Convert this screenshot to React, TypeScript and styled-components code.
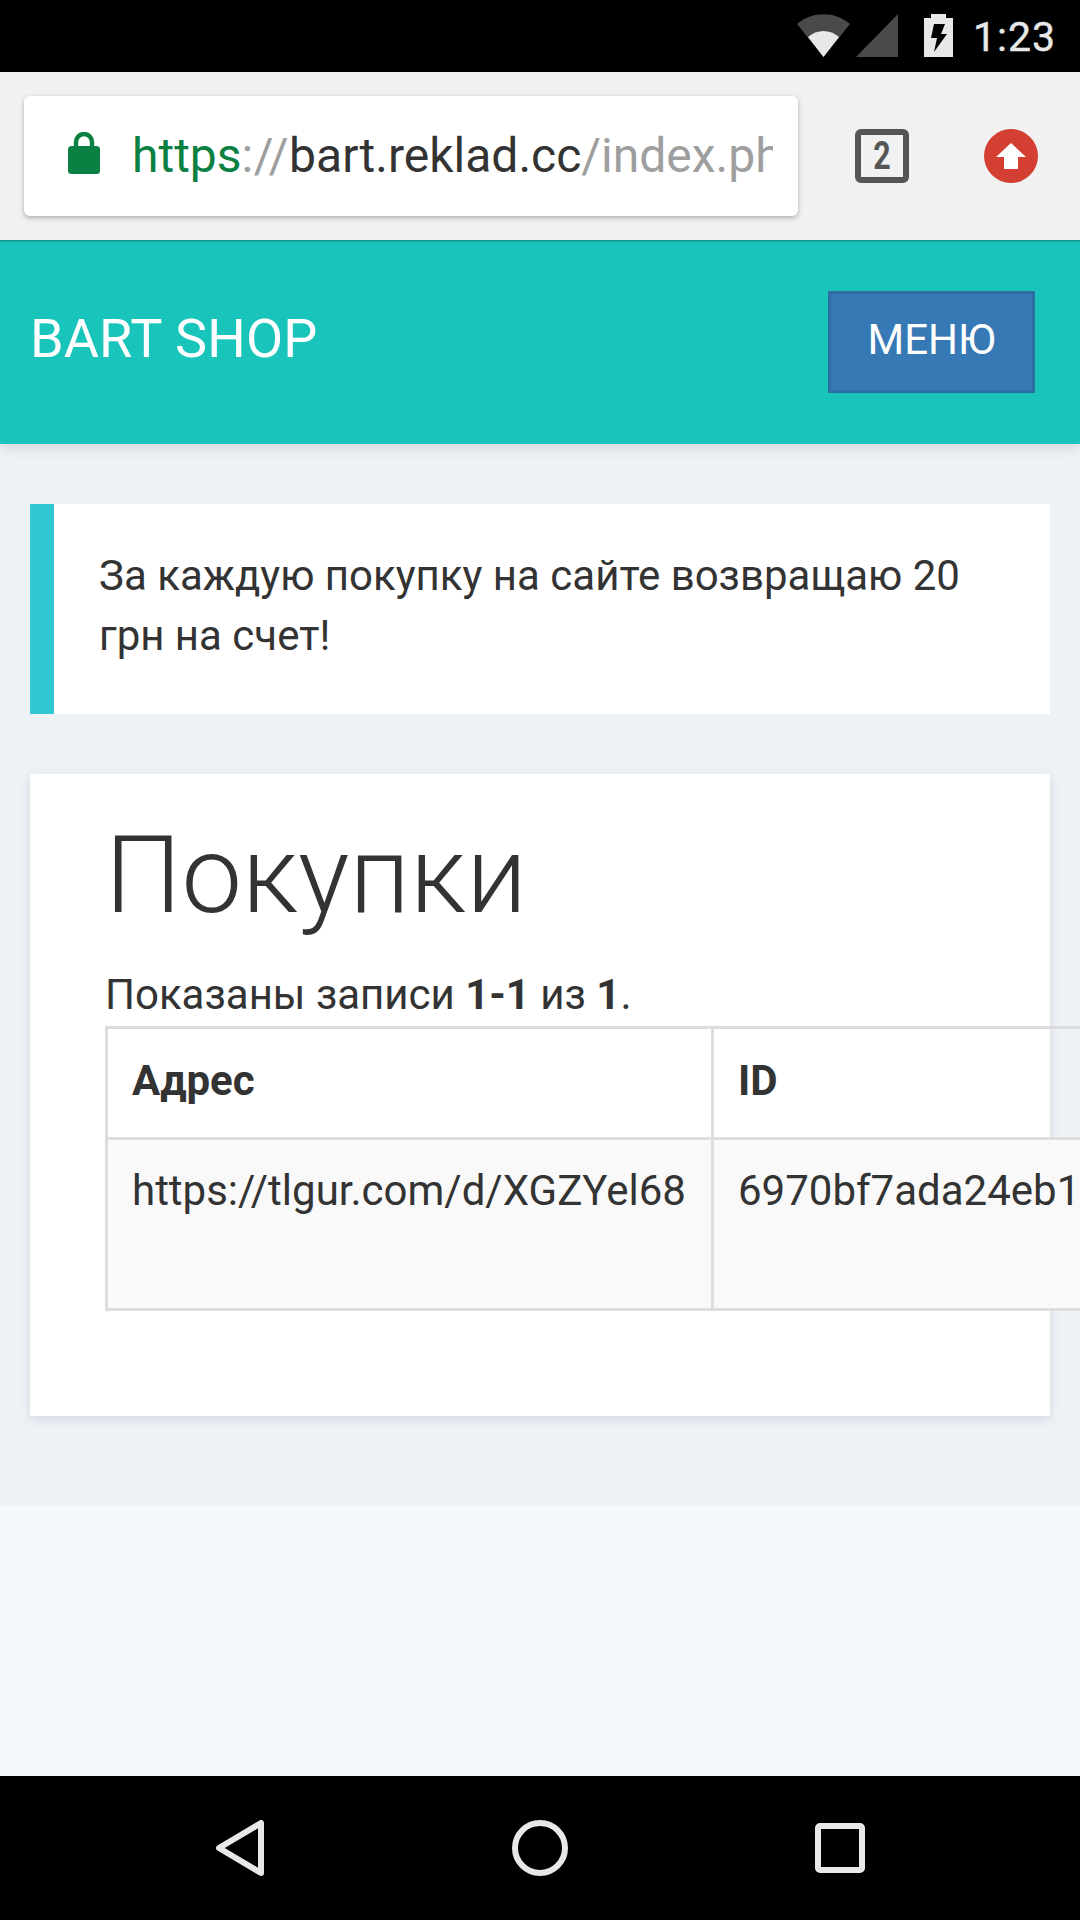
import React from "react";
import styled, { createGlobalStyle } from "styled-components";

const Global = createGlobalStyle`
  html, body { margin: 0; padding: 0; background: #000; }
  * { box-sizing: border-box; }
`;

const Screen = styled.div`
  width: 1080px;
  height: 1920px;
  display: flex;
  flex-direction: column;
  overflow: hidden;
  background: #f5f9fc;
  font-family: Roboto, "Liberation Sans", sans-serif;
  color: #333;
`;

const StatusBar = styled.div`
  height: 72px;
  flex: none;
  background: #000;
  display: flex;
  align-items: flex-start;
  justify-content: flex-end;
  padding: 14px 24px 0 0;
`;
const StatusIcon = styled.svg`
  display: block;
  flex: none;
`;
const Battery = styled(StatusIcon)`
  margin-left: 25px;
`;
const Clock = styled.span`
  font-size: 41px;
  line-height: 46px;
  color: #e8e8e8;
  margin-left: 20px;
  letter-spacing: 1px;
  -webkit-text-stroke: 0.4px #e8e8e8;
`;

const Toolbar = styled.div`
  height: 168px;
  flex: none;
  background: #f1f1f1;
  display: flex;
  align-items: center;
  padding-left: 24px;
  position: relative;
  z-index: 2;
  box-shadow: 0 1px 2px rgba(0, 0, 0, 0.35);
`;
const UrlBox = styled.div`
  width: 774px;
  height: 120px;
  background: #fff;
  border-radius: 6px;
  box-shadow: 0 2px 5px rgba(0, 0, 0, 0.28);
  display: flex;
  align-items: center;
  padding: 0 25px 0 44px;
`;
const LockIcon = styled.svg`
  display: block;
  flex: none;
  margin: 0 32px 6px 0;
`;
const UrlText = styled.div`
  flex: 1;
  min-width: 0;
  overflow: hidden;
  white-space: nowrap;
  font-size: 48px;
  line-height: 60px;
`;
const Scheme = styled.span`
  color: #0b8043;
`;
const Faded = styled.span`
  color: #9e9e9e;
`;
const Separator = styled(Faded)`
  letter-spacing: 0.5px;
`;
const Host = styled.span`
  color: #333;
`;
const TabCount = styled.div`
  width: 54px;
  height: 54px;
  flex: none;
  margin-left: 57px;
  border: 6px solid #555;
  border-radius: 6px;
  display: flex;
  align-items: center;
  justify-content: center;
  font-size: 38px;
  font-weight: 700;
  color: #555;
  line-height: 1;
`;
const TabDigit = styled.span`
  display: block;
  transform: scaleX(0.8);
`;
const UpdateBadge = styled.svg`
  display: block;
  flex: none;
  margin-left: 75px;
`;

const Header = styled.header`
  height: 204px;
  flex: none;
  background: #19c5bb;
  display: flex;
  align-items: center;
  justify-content: space-between;
  padding: 0 45px 0 30px;
  position: relative;
  z-index: 1;
  box-shadow: 0 3px 14px rgba(0, 0, 0, 0.13);
`;
const Brand = styled.div`
  font-size: 54px;
  letter-spacing: 0.1px;
  color: #fff;
  padding-bottom: 8px;
`;
const MenuButton = styled.button`
  width: 207px;
  height: 102px;
  background: #3679b5;
  border: 3px solid #2e6da4;
  color: #fff;
  font-family: inherit;
  font-size: 42px;
  padding: 0 0 6px;
`;

const Main = styled.main`
  height: 1062px;
  flex: none;
  background: #eef1f6;
  padding: 60px 30px 0;
`;
const Alert = styled.div`
  background: #fff;
  border-left: 24px solid #32c5d2;
  padding: 42px 46px 0 45px;
  font-size: 42px;
  line-height: 60px;
  height: 210px;
`;
const Card = styled.section`
  margin-top: 60px;
  height: 642px;
  background: #fff;
  padding: 0 0 0 75px;
  box-shadow: 0 3px 9px rgba(80, 90, 110, 0.16);
`;
const Title = styled.h1`
  margin: 0;
  padding: 42px 0 0 0;
  font-size: 108px;
  line-height: 118px;
  font-weight: 300;
  height: 193px;
`;
const Summary = styled.div`
  font-size: 42px;
  line-height: 56px;
  padding-bottom: 3px;
`;
const Table = styled.table`
  border-collapse: collapse;
  table-layout: fixed;
  width: 1200px;
  font-size: 42px;
  line-height: 58px;
`;
const Col = styled.col<{ $w: number }>`
  width: ${(p) => p.$w}px;
`;
const HeadCell = styled.th`
  border: 3px solid #ddd;
  height: 111px;
  padding: 0 24px 4px;
  text-align: left;
  font-weight: 700;
  white-space: nowrap;
`;
const BodyRow = styled.tr`
  background: #f9f9f9;
`;
const BodyCell = styled.td`
  border: 3px solid #ddd;
  height: 171px;
  padding: 22px 24px 0;
  vertical-align: top;
  white-space: nowrap;
`;

const Footer = styled.div`
  flex: 1;
`;

const NavBar = styled.nav`
  height: 144px;
  flex: none;
  background: #000;
  display: grid;
  grid-template-columns: repeat(3, 300px);
  justify-content: center;
  align-items: center;
  justify-items: center;
`;

export default function App() {
  return (
    <Screen>
      <Global />
      <StatusBar>
        <StatusIcon width="102" height="44" viewBox="0 0 102 44">
          <path d="M0 10 C15 -3 38 -3 53 10 L26.5 43 Z" fill="#4a4a4a" />
          <path d="M11 23 C20 15 33 15 42 23 L26.5 43 Z" fill="#e8e8e8" />
          <path d="M59 43 L101 0 L101 43 Z" fill="#4a4a4a" />
        </StatusIcon>
        <Battery width="29" height="44" viewBox="0 0 29 44">
          <path d="M7 0 H22 V4 H29 V43 H0 V4 H7 Z" fill="#e8e8e8" />
          <path d="M10 10 H21 L17 20 H23 L10 38 L13 24 H7 Z" fill="#000" />
        </Battery>
        <Clock>1:23</Clock>
      </StatusBar>
      <Toolbar>
        <UrlBox>
          <LockIcon width="32" height="42" viewBox="0 0 32 42">
            <path d="M8 15 V10 a8 8 0 0 1 16 0 V15" fill="none" stroke="#0b8043" stroke-width="4.5" />
            <rect x="0" y="14" width="32" height="28" rx="3.5" fill="#0b8043" />
          </LockIcon>
          <UrlText>
            <Scheme>https</Scheme>
            <Separator>://</Separator>
            <Host>bart.reklad.cc</Host>
            <Faded>/index.php</Faded>
          </UrlText>
        </UrlBox>
        <TabCount>
          <TabDigit>2</TabDigit>
        </TabCount>
        <UpdateBadge width="54" height="54" viewBox="0 0 54 54">
          <circle cx="27" cy="27" r="27" fill="#d33f32" />
          <path d="M27 14 L42 28 H34 V40 H20 V28 H12 Z" fill="#fff" />
        </UpdateBadge>
      </Toolbar>
      <Header>
        <Brand>BART SHOP</Brand>
        <MenuButton>МЕНЮ</MenuButton>
      </Header>
      <Main>
        <Alert>За каждую покупку на сайте возвращаю 20 грн на счет!</Alert>
        <Card>
          <Title>Покупки</Title>
          <Summary>
            Показаны записи <b>1-1</b> из <b>1</b>.
          </Summary>
          <Table>
            <colgroup>
              <Col $w={606} />
              <Col $w={594} />
            </colgroup>
            <thead>
              <tr>
                <HeadCell>Адрес</HeadCell>
                <HeadCell>ID</HeadCell>
              </tr>
            </thead>
            <tbody>
              <BodyRow>
                <BodyCell>https://tlgur.com/d/XGZYel68</BodyCell>
                <BodyCell>6970bf7ada24eb1</BodyCell>
              </BodyRow>
            </tbody>
          </Table>
        </Card>
      </Main>
      <Footer />
      <NavBar>
        <svg width="48" height="56" viewBox="0 0 48 56">
          <path d="M45 3 V53 L3 28 Z" fill="none" stroke="#e8e8e8" stroke-width="6" stroke-linejoin="round" />
        </svg>
        <svg width="56" height="56" viewBox="0 0 56 56">
          <circle cx="28" cy="28" r="25" fill="none" stroke="#e8e8e8" stroke-width="6" />
        </svg>
        <svg width="50" height="50" viewBox="0 0 50 50">
          <rect x="3" y="3" width="44" height="44" rx="2" fill="none" stroke="#e8e8e8" stroke-width="6" />
        </svg>
      </NavBar>
    </Screen>
  );
}
